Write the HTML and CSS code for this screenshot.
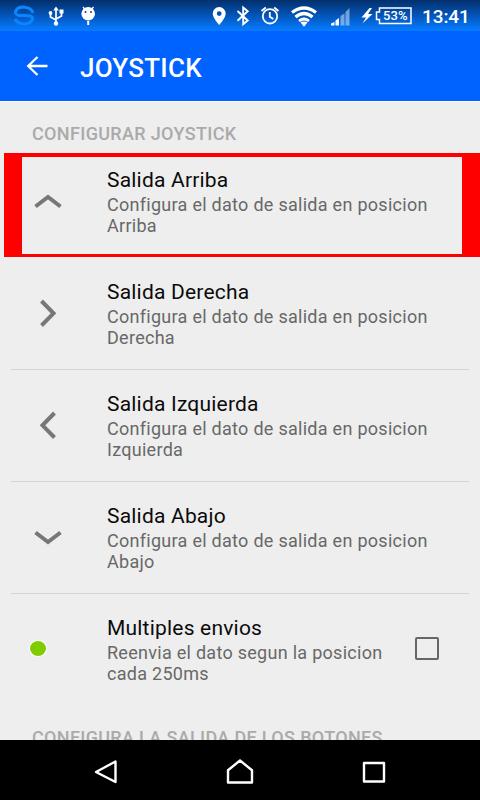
FILE: index.html
```html
<!DOCTYPE html>
<html lang="es">
<head>
<meta charset="utf-8">
<title>Joystick</title>
<link rel="stylesheet" href="styles.css">
</head>
<body>
<div class="screen">
  <div class="status">
    <svg class="status-icons" width="420" height="31" viewBox="0 0 420 31" fill="none" stroke="#fff">
      <g stroke="#0a84ff" stroke-width="3">
        <path d="M33 13C31 6 18 5 15.500 11.500C15 16 20 15.500 24 15.500C29 15.500 33 16 32.500 19C30 26 18 25 15 19"/>
      </g>
      <g stroke-width="1.700">
        <path d="M56 9v15M50.500 12.500v4.500l5.500 3M61.500 11v5l-5.500 3"/>
        <path d="M56 6.500l2.800 4h-5.600z" fill="#fff" stroke="none"/>
        <circle cx="56" cy="23.500" r="2.200" fill="#fff" stroke="none"/>
        <circle cx="50.500" cy="13" r="1.900" fill="#fff" stroke="none"/>
        <path d="M59.500 9.500h4v4h-4z" fill="#fff" stroke="none"/>
      </g>
      <path d="M83 7l2.500 3M93.500 7l-2.500 3" stroke-width="1.300"/>
      <circle cx="88.200" cy="13.800" r="6.800" fill="#fff" stroke="none"/>
      <path d="M88.200 21v4" stroke-width="2"/>
      <circle cx="85.500" cy="12" r=".9" fill="#06346f" stroke="none"/>
      <circle cx="91" cy="12" r=".9" fill="#06346f" stroke="none"/>
      <path fill="#fff" stroke="none" fill-rule="evenodd" d="M219.200 7a6.500 6.500 0 0 0-6.500 6.500c0 4.500 6.500 11.500 6.500 11.500s6.500-7 6.500-11.500a6.500 6.500 0 0 0-6.500-6.500zm0 4.200a2.400 2.400 0 1 1 0 4.800 2.400 2.400 0 0 1 0-4.800z"/>
      <path d="M237.500 11l10.200 9.500-4.500 3.800V7.500l4.500 3.700-10.200 9.500" stroke-width="1.900"/>
      <circle cx="270" cy="16.300" r="7.200" stroke-width="1.800"/>
      <path d="M269.800 12v4.800l3.500 2.200M261.500 11l4.300-3.500M278.500 11l-4.300-3.500" stroke-width="1.800"/>
      <g stroke-width="3.200">
        <path d="M292 12.500Q304 3.500 316 12.500"/>
        <path d="M295.500 17Q304 10 312.500 17"/>
        <path d="M299 21Q304 17 309 21" stroke-width="2.800"/>
      </g>
      <path d="M300.500 22.500q3.500-2 7 0l-3.500 4.200z" fill="#fff" stroke="none"/>
      <g fill="#fff" stroke="none">
        <path d="M331 25.500v-2l3.500-1.500v3.500zM335.500 25.500v-5l3.500-2.500v7.500z"/>
        <path opacity=".45" d="M340.500 25.500V16l4-2.500v12zM345.500 25.500V12l4-4v17.500z"/>
        <path d="M369.500 8l-8 9.500h4.500l-3.500 6 10-9.500h-4.500l4-6z"/>
      </g>
      <path d="M379.500 8H411v15.500h-31.500v-4h-3v-7.500h3z" stroke-width="1.500"/>
      <text class="battery" x="395.300" y="20" text-anchor="middle">53%</text>
    </svg>
    <span class="clock">13:41</span>
  </div>
  <header class="appbar">
    <svg width="22" height="20" viewBox="0 0 22 20" fill="none" stroke="#fff" stroke-width="2.300"><path d="M21.500 10H2.500M11.500 1L2.200 10l9.300 9"/></svg>
    <h1>JOYSTICK</h1>
  </header>
  <main class="settings">
    <h2 class="section">CONFIGURAR JOYSTICK</h2>
    <div class="row selected">
      <div class="icon"><svg width="28" height="28" viewBox="0 0 28 28"><path d="M1.500 19.500L14 10l12.500 9.500"/></svg></div>
      <div class="copy"><h3>Salida Arriba</h3><p>Configura el dato de salida en posicion<br>Arriba</p></div>
    </div>
    <div class="row">
      <div class="icon"><svg width="28" height="28" viewBox="0 0 28 28"><path d="M7.500 2L19.500 14.300L7.500 26.500"/></svg></div>
      <div class="copy"><h3>Salida Derecha</h3><p>Configura el dato de salida en posicion<br>Derecha</p></div>
    </div>
    <div class="row">
      <div class="icon"><svg width="28" height="28" viewBox="0 0 28 28"><path d="M20.500 2L8.500 14.300L20.500 26.500"/></svg></div>
      <div class="copy"><h3>Salida Izquierda</h3><p>Configura el dato de salida en posicion<br>Izquierda</p></div>
    </div>
    <div class="row">
      <div class="icon"><svg width="28" height="28" viewBox="0 0 28 28"><path d="M1.500 9.500L14 19l12.500-9.500"/></svg></div>
      <div class="copy"><h3>Salida Abajo</h3><p>Configura el dato de salida en posicion<br>Abajo</p></div>
    </div>
    <div class="row last">
      <div class="icon"><span class="dot"></span></div>
      <div class="copy"><h3>Multiples envios</h3><p>Reenvia el dato segun la posicion<br>cada 250ms</p></div>
      <span class="checkbox"></span>
    </div>
    <h2 class="section next">CONFIGURA LA SALIDA DE LOS BOTONES</h2>
  </main>
  <nav class="navbar">
    <svg width="24" height="26" viewBox="0 0 24 26"><path d="M21.500 2.500v20.500L2 13z"/></svg>
    <svg width="28" height="26" viewBox="0 0 28 26"><path d="M2 23.500V11.200L14 1.500l12 9.700v12.300z"/></svg>
    <svg width="24" height="26" viewBox="0 0 24 26"><path d="M2 4h20v18.500H2z"/></svg>
  </nav>
</div>
</body>
</html>
```
FILE: styles.css
```css
*, *::before { box-sizing: border-box; margin: 0; }
body { font-family: Roboto, sans-serif; background: #eee; }
.screen { width: 480px; height: 800px; display: flex; flex-direction: column; overflow: hidden; }
.status {
  height: 31px; flex: none; display: flex; align-items: center;
  background: linear-gradient(#032f6b, #0351b0 45%, #0675f5 90%, #087bff);
}
.status-icons { flex: none; }
.battery { font-size: 13px; font-weight: 500; fill: #fff; stroke: none; }
.clock { color: #fff; font-size: 19px; font-weight: 500; line-height: 31px; letter-spacing: -.1px; margin-left: 2px; padding-top: 1px; }
.appbar {
  height: 70px; flex: none; display: flex; align-items: center; gap: 32px;
  padding-left: 26px; background: #0062ff; color: #fff;
}
.appbar h1 { font-size: 26px; font-weight: 500; line-height: 30px; padding-top: 3px; letter-spacing: .25px; }
.settings { height: 639px; flex: none; overflow: hidden; border-top: 1px solid #fafafa; }
.section {
  height: 44px; padding: 22px 32px 0; font-size: 18px; font-weight: 500; line-height: 20px;
  letter-spacing: .34px; color: #aaa; white-space: nowrap;
}
.row {
  position: relative; height: 112px; margin: 0 11px; padding: 21px 0 0 96px;
  display: flex; border-bottom: 1px solid #d7d7d7;
}
.row.last { border-bottom: 0; }
.row.selected { border-bottom: 0; }
.selected::before {
  content: ""; position: absolute; left: -7px; top: 7px; width: 476px; height: 104px;
  border: solid #f00; border-width: 4px 18px 3px;
}
.icon { width: 76px; margin-left: -96px; margin-right: 20px; padding: 20px 0 0 23px; }
.icon svg { display: block; fill: none; stroke: #777; stroke-width: 4; }
.dot { display: block; width: 16px; height: 15px; margin: 6px 0 0 -4px; border-radius: 50%; background: #80cc00; box-shadow: 0 0 0 1px #fff; }
.copy { flex: none; white-space: nowrap; }
.copy h3 { font-size: 21px; font-weight: 400; line-height: 26px; letter-spacing: .2px; color: #0b0b0b; }
.copy p { font-size: 18px; line-height: 21px; letter-spacing: .28px; color: #686868; margin-top: 1px; }
.checkbox { width: 24px; height: 23px; margin: 22px 30px 0 auto; border: 2px solid #666; border-radius: 2px; }
.next { padding-top: 22px; }
.navbar { height: 60px; flex: none; background: #000; display: flex; align-items: center; justify-content: space-between; padding: 3px 94px 0 94px; }
.navbar svg { fill: none; stroke: #fff; stroke-width: 2.400; stroke-linejoin: round; }
```
